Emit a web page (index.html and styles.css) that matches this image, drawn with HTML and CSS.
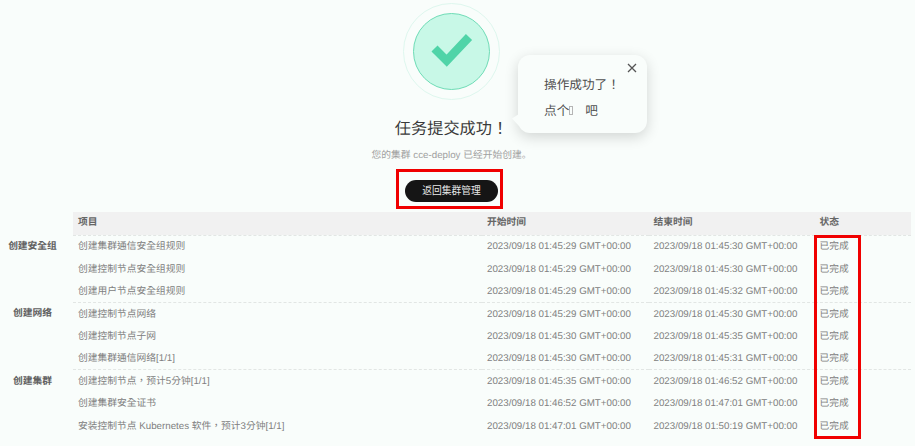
FILE: index.html
```html
<!DOCTYPE html>
<html lang="zh-CN">
<head>
<meta charset="utf-8">
<title>任务提交成功</title>
<link rel="stylesheet" href="styles.css">
</head>
<body>
<div class="page">
  <section class="hero">
    <svg class="success-icon" width="98" height="99" viewBox="0 0 98 99" aria-hidden="true">
      <circle cx="48.5" cy="49.5" r="48" fill="none" stroke="#def7ee" stroke-width="1"/>
      <circle cx="48.5" cy="49.5" r="38" fill="#c8f8e7" stroke="#6edcb6" stroke-width="1"/>
      <path d="M31.5 46.5 L43.7 58.7 L66 35" fill="none" stroke="#50d4a8" stroke-width="8.5"/>
    </svg>
    <h1 class="title">任务提交成功！</h1>
    <p class="subtitle">您的集群 cce-deploy 已经开始创建。</p>
    <button class="back-button" type="button">返回集群管理</button>
  </section>

  <table class="tasks">
    <colgroup>
      <col class="col-group"><col class="col-name"><col class="col-start"><col class="col-end"><col class="col-state">
    </colgroup>
    <thead>
      <tr><th class="blank"></th><th>项目</th><th>开始时间</th><th>结束时间</th><th>状态</th></tr>
    </thead>
    <tbody>
      <tr class="first"><th class="group" rowspan="3">创建安全组</th><td>创建集群通信安全组规则</td><td>2023/09/18 01:45:29 GMT+00:00</td><td>2023/09/18 01:45:30 GMT+00:00</td><td>已完成</td></tr>
      <tr><td>创建控制节点安全组规则</td><td>2023/09/18 01:45:29 GMT+00:00</td><td>2023/09/18 01:45:30 GMT+00:00</td><td>已完成</td></tr>
      <tr><td>创建用户节点安全组规则</td><td>2023/09/18 01:45:29 GMT+00:00</td><td>2023/09/18 01:45:32 GMT+00:00</td><td>已完成</td></tr>
      <tr class="first"><th class="group" rowspan="3">创建网络</th><td>创建控制节点网络</td><td>2023/09/18 01:45:29 GMT+00:00</td><td>2023/09/18 01:45:30 GMT+00:00</td><td>已完成</td></tr>
      <tr><td>创建控制节点子网</td><td>2023/09/18 01:45:30 GMT+00:00</td><td>2023/09/18 01:45:35 GMT+00:00</td><td>已完成</td></tr>
      <tr><td>创建集群通信网络[1/1]</td><td>2023/09/18 01:45:30 GMT+00:00</td><td>2023/09/18 01:45:31 GMT+00:00</td><td>已完成</td></tr>
      <tr class="first"><th class="group" rowspan="3">创建集群</th><td>创建控制节点，预计5分钟[1/1]</td><td>2023/09/18 01:45:35 GMT+00:00</td><td>2023/09/18 01:46:52 GMT+00:00</td><td>已完成</td></tr>
      <tr><td>创建集群安全证书</td><td>2023/09/18 01:46:52 GMT+00:00</td><td>2023/09/18 01:47:01 GMT+00:00</td><td>已完成</td></tr>
      <tr><td>安装控制节点 Kubernetes 软件，预计3分钟[1/1]</td><td>2023/09/18 01:47:01 GMT+00:00</td><td>2023/09/18 01:50:19 GMT+00:00</td><td>已完成</td></tr>
    </tbody>
  </table>

  <aside class="popover">
    <svg class="popover-close" width="10" height="10" viewBox="0 0 10 10" aria-hidden="true">
      <path d="M1 1 L9 9 M9 1 L1 9" fill="none" stroke="#555" stroke-width="1.3"/>
    </svg>
    <p class="popover-line">操作成功了！</p>
    <p class="popover-line">点个<span class="tofu"></span>吧</p>
  </aside>
  <div class="mark mark-button"></div>
  <div class="mark mark-status"></div>
</div>
</body>
</html>
```

FILE: styles.css
```css
* { box-sizing: border-box; }

html, body {
  margin: 0;
  height: 100%;
  background: #f9fdfb;
  overflow: hidden;
}

body {
  font-family: "Liberation Sans", "Noto Sans CJK TC", sans-serif;
  color: #777;
  text-rendering: geometricPrecision;
}

body, button {
  font-feature-settings: "locl" 0;
}

.page {
  position: relative;
  width: 915px;
  height: 446px;
  padding-top: 2px;
}

.hero {
  display: flex;
  flex-direction: column;
  align-items: center;
  padding-right: 12px;
}

.success-icon { display: block; }

.title {
  margin: 16px 0 0;
  font-size: 16.2px;
  line-height: 24px;
  font-weight: 400;
  color: #3a3a3a;
}

.subtitle {
  margin: 8px 0 0;
  font-size: 9.75px;
  line-height: 14px;
  color: #a0a0a0;
  font-feature-settings: normal;
}

.back-button {
  margin-top: 17px;
  width: 93px;
  height: 22px;
  border: 0;
  border-radius: 11px;
  padding: 0;
  background: #151515;
  color: #e8e8e8;
  font: 9.75px/22px "Liberation Sans", "Noto Sans CJK TC", sans-serif;
}

.tasks {
  margin-top: 10px;
  width: 911px;
  table-layout: fixed;
  border-collapse: collapse;
  font-size: 9.75px;
}

.col-group { width: 73px; }
.col-name { width: 409px; }
.col-start { width: 166.5px; }
.col-end { width: 166px; }

.tasks th, .tasks td {
  height: 22.45px;
  padding: 0 5px;
  text-align: left;
  white-space: nowrap;
  line-height: 14px;
}

.tasks tbody td { padding-top: 2px; }

.tasks thead th {
  height: 23px;
  background: #f1f1f1;
  font-weight: 700;
  color: #666;
}

.tasks thead th.blank { background: transparent; }

.tasks td { color: #808080; }

.tasks tbody .first td {
  border-top: 1px dashed #e2e6e4;
}

.tasks .group {
  padding: 5px 8px 0 0;
  vertical-align: top;
  text-align: center;
  font-weight: 700;
  color: #606060;
}

.popover {
  position: absolute;
  left: 518px;
  top: 55px;
  width: 129px;
  height: 78px;
  padding: 21px 0 0 26px;
  border-radius: 12px;
  background: #f9fdfb;
  box-shadow: 0 4px 14px rgba(0, 0, 0, 0.16);
  color: #505050;
}

.popover::before {
  content: "";
  position: absolute;
  left: -6px;
  top: 59px;
  width: 7px;
  height: 12px;
  background: #f9fdfb;
  clip-path: polygon(100% 0, 0 38%, 100% 100%);
}

.popover-close {
  position: absolute;
  left: 108.5px;
  top: 8px;
}

.popover-line {
  margin: 0 0 8px;
  font-size: 12.67px;
  line-height: 18px;
  white-space: nowrap;
}

.tofu {
  display: inline-block;
  width: 4px;
  height: 9px;
  margin-right: 12px;
  border: 1px solid #b5b5b5;
}

.mark {
  position: absolute;
  border: 3px solid #f00000;
}

.mark-button {
  left: 396px;
  top: 169px;
  width: 107px;
  height: 40px;
}

.mark-status {
  left: 814px;
  top: 235px;
  width: 47px;
  height: 204px;
}
```
